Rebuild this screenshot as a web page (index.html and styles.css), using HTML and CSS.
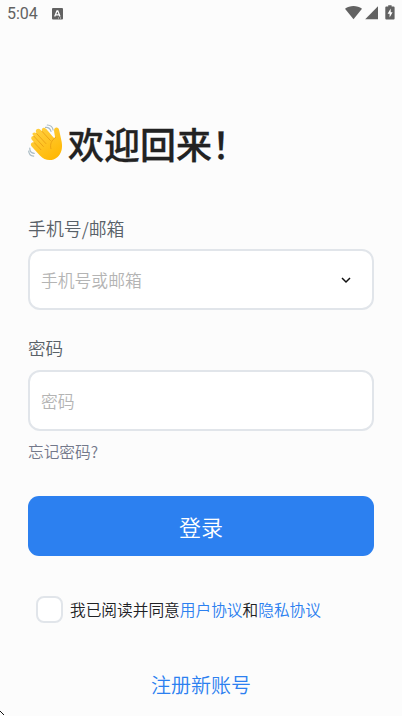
FILE: index.html
```
<!DOCTYPE html>
<html lang="zh-CN">
<head>
<meta charset="utf-8">
<title>登录</title>
<link rel="stylesheet" href="styles.css">
</head>
<body>
<header class="status">
  <span class="time">5:04</span>
  <svg class="badge" width="11" height="12" viewBox="0 0 11 12"><rect width="11" height="11.500" rx="1" fill="#626262"/><path d="M2.700 8.500 5 2.800h.8L8 8.500M3.600 6.800h3.600" fill="none" stroke="#fff" stroke-width="1.300"/><path d="M6 10h1M8 10h1" stroke="#fff" stroke-width=".8"/></svg>
  <svg class="signals" width="52" height="16" viewBox="0 0 52 16">
    <path d="M0 3.700C4.800.1 12.200.1 17 3.700L8.500 14.200Z" fill="#626262"/>
    <path d="M20.200 14.200 33 1.300v12.900Z" fill="#626262"/>
    <path d="M41.300 1.600h1.900V.2h3.400v1.400h2q1 0 1 1v10.900q0 1-1 1h-7.300q-1 0-1-1V2.600q0-1 1-1Z" fill="#626262"/>
    <path d="M45.700 3.600 42.600 8.800h2v3.800l3-5.400h-1.900Z" fill="#fff"/>
  </svg>
</header>
<main class="page">
  <h1 class="title">
    <svg class="wave" width="36" height="38" viewBox="0 0 36 38">
      <defs><linearGradient id="skin" x1="0" y1="0" x2=".7" y2="1"><stop offset="0" stop-color="#ffd247"/><stop offset="1" stop-color="#ffb804"/></linearGradient></defs>
      <g fill="none" stroke="#a9bbc4" stroke-width="1.200" stroke-linecap="round">
        <path d="M17.500 3.400c2.800-.2 4.800 1.300 5.500 4"/><path d="M19.300 1c3.200.1 5.300 2 5.800 5"/>
        <path d="M1.800 24.200c-.1 3 1.600 4.800 4.400 5.200"/><path d="M.7 27c.2 3 2.200 5 5 5.100"/>
      </g>
      <path d="M4.600 9.200c1.300-1.200 2.900-.7 4 .3l-.1-.2c-.9-1.500-1-3.100.2-4 1.300-1 2.800-.5 4 .7l1.300 1.300c-.5-1.300-.1-2.600 1-3.200 1.200-.6 2.400 0 3.500 1.200l7 8.200c.9.900 1.600.5 1.500-.8l-.9-5.200c-.3-2.300.5-3.700 2-4 1.600-.3 2.800.9 3.200 3.200l2.400 11.300c1.100 6.700-.6 12-4.400 15.200-5.300 4.400-12.300 3.800-17.400-1.600L3.900 22.800c-1.200-1.300-1.400-2.800-.4-3.800.8-.8 1.800-.8 2.800-.2L4.500 16.500c-1.300-1.300-1.700-2.800-.7-3.900.6-.6 1.300-.8 2-.6-.9-.9-1.600-1.800-1.200-2.800Z" fill="url(#skin)"/>
      <path d="M8.700 9.600l9.200 10M14.200 7.500l8.200 9M5.900 12.200l9.500 10.300M6.400 18.800l6.600 7M27.500 13.500c-4.200 2.900-5.700 6.600-4.600 11.200" fill="none" stroke="#e79b11" stroke-width=".8" stroke-linecap="round"/>
    </svg><span class="title-text">欢迎回来！</span>
  </h1>
  <label class="label">手机号/邮箱</label>
  <div class="field"><span>手机号或邮箱</span>
    <svg width="12" height="8" viewBox="0 0 12 8"><path d="m2 2 4 4 4-4" fill="none" stroke="#111" stroke-width="1.500"/></svg>
  </div>
  <label class="label second">密码</label>
  <div class="field"><span>密码</span></div>
  <a class="forgot">忘记密码?</a>
  <button class="login">登录</button>
  <div class="agree"><span class="check"></span><span>我已阅读并同意<a>用户协议</a>和<a>隐私协议</a></span></div>
  <a class="register">注册新账号</a>
</main>
<svg class="corner" width="5" height="5" viewBox="0 0 5 5"><path d="M0 0h1v1h1v1h1v1H2V2H1V1H0ZM3 3h1v1H3Z" fill="#111"/></svg>
</body>
</html>
```
FILE: styles.css
```
* { box-sizing: border-box; }
body {
  margin: 0;
  width: 402px;
  height: 716px;
  overflow: hidden;
  background: #fcfcfc;
  font-family: "Noto Sans CJK SC", sans-serif;
  font-weight: 350;
  color: #202124;
}
.status {
  display: flex;
  height: 28px;
  padding: 0 5px 0 7px;
}
.time {
  width: 45px;
  font-family: Roboto, sans-serif;
  font-size: 16px;
  font-weight: 400;
  line-height: 28px;
  color: #626262;
}
.badge { margin-top: 8px; }
.signals { margin: 5px 0 0 auto; }
.page {
  display: flex;
  flex-direction: column;
  padding: 0 28px;
}
.title {
  display: flex;
  height: 54px;
  margin: 88px 0 0;
  font-size: 36px;
  font-weight: 500;
  line-height: 55px;
}
.wave { margin: 8px 4px 0 0; }
.title-text {
  white-space: nowrap;
  color: #222;
  -webkit-text-stroke: 0.3px #222;
}
.label {
  height: 26px;
  margin-top: 45px;
  font-size: 17.900px;
  line-height: 26px;
  color: #596168;
}
.second {
  margin-top: 26px;
  font-size: 17.600px;
  line-height: 24px;
}
.field {
  display: flex;
  align-items: center;
  justify-content: space-between;
  height: 61px;
  margin-top: 8px;
  padding: 0 20px 0 11px;
  border: 2px solid #e1e5ea;
  border-radius: 12px;
  background: #fff;
  font-size: 16.800px;
  color: #b4b4b4;
}
.field span { margin-top: 1px; }
.forgot {
  height: 24px;
  margin-top: 9px;
  font-size: 15.700px;
  line-height: 24px;
  color: #73788a;
}
.login {
  height: 60px;
  margin-top: 32px;
  padding: 1px 0 0;
  border: 0;
  border-radius: 11px;
  background: #2c80f0;
  font: 350 22px/57px "Noto Sans CJK SC", sans-serif;
  color: #fff;
}
.agree {
  display: flex;
  align-items: center;
  height: 28px;
  margin: 39px 0 0 8px;
  font-size: 15.700px;
  white-space: nowrap;
}
.agree a, .register { color: #2c80f0; }
.check {
  width: 27px;
  height: 27px;
  margin-right: 7px;
  border: 2px solid #e1e5ea;
  border-radius: 8px;
  background: #fff;
}
.register {
  height: 30px;
  margin-top: 47px;
  font-size: 20px;
  line-height: 30px;
  text-align: center;
}
.corner { position: absolute; left: 0; bottom: 0; }
```
